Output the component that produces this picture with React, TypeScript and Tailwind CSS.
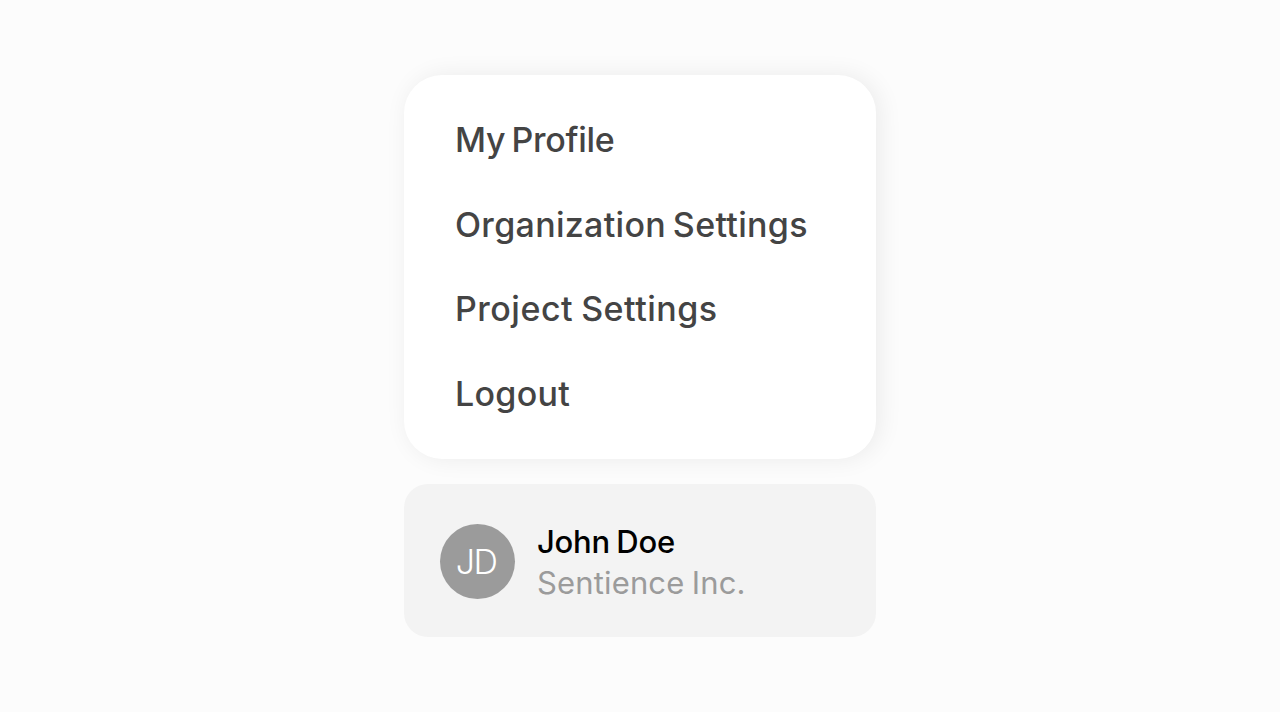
const menuItems = [
  { label: "My Profile", spacing: "tracking-[-0.3px] [word-spacing:-2.5px]" },
  { label: "Organization Settings", spacing: "tracking-[0.3px] [word-spacing:-2.5px]" },
  { label: "Project Settings", spacing: "tracking-[0.5px] [word-spacing:-1.5px]" },
  { label: "Logout", spacing: "tracking-[0.3px]" },
];

export default function App() {
  return (
    <main className="flex h-screen flex-col items-center bg-[#fcfcfc] pt-[75px] font-['Inter',sans-serif]">
      {/* Menu */}
      <nav className="flex h-[384px] w-[472px] flex-col rounded-[38px] bg-white pt-[22.5px] pl-[51px] shadow-[4px_0_24px_rgba(0,0,0,0.07)]">
        {menuItems.map((item) => (
          <a
            key={item.label}
            href="#"
            className={`flex h-[84.6px] items-center text-[34px] font-medium whitespace-nowrap text-[#444444] ${item.spacing}`}
          >
            {item.label}
          </a>
        ))}
      </nav>

      {/* Account */}
      <button className="relative mt-[25px] flex h-[153px] w-[472px] items-center rounded-[24px] bg-[#f3f3f3] pt-[2px] pl-9 text-left">
        <span className="flex size-[75px] items-center justify-center rounded-full bg-[#9b9b9b] pr-[3px] text-[34px] font-[350] tracking-[-1.5px] text-white">
          JD
        </span>
        <span className="ml-[22px] flex flex-col text-[31px] leading-[41px] whitespace-nowrap">
          <span className="font-medium tracking-[-0.25px] text-black [word-spacing:-1.5px]">
            John Doe
          </span>
          <span className="tracking-[0.15px] text-[#9b9b9b] [word-spacing:-1.5px]">
            Sentience Inc.
          </span>
        </span>
      </button>
    </main>
  );
}
